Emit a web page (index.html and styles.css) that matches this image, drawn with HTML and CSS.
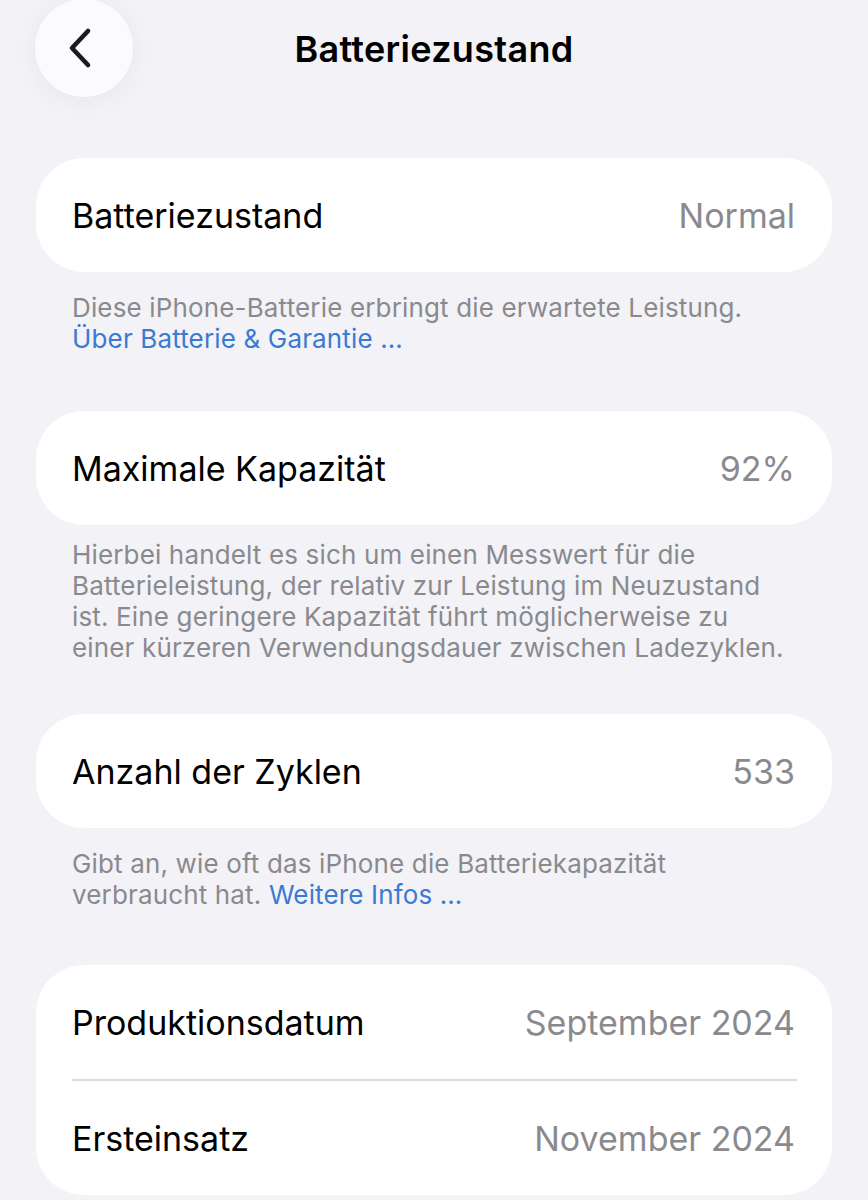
FILE: index.html
```html
<!DOCTYPE html>
<html lang="de">
<head>
<meta charset="utf-8">
<title>Batteriezustand</title>
<link rel="stylesheet" href="styles.css">
</head>
<body>
<header class="nav">
  <div class="nav-left">
    <button class="back" aria-label="Zurück">
      <svg width="30" height="44" viewBox="0 0 30 44"><path d="M22 5 L6 22 L22 39" fill="none" stroke="#1c1c1e" stroke-width="4.6" stroke-linecap="round" stroke-linejoin="round"/></svg>
    </button>
  </div>
  <h1 class="title">Batteriezustand</h1>
  <div class="nav-right"></div>
</header>
<main class="content">
  <section class="card card-first">
    <div class="row"><span class="label">Batteriezustand</span><span class="value">Normal</span></div>
  </section>
  <p class="footnote footnote-link">Diese iPhone-Batterie erbringt die erwartete Leistung.<br><a class="link" href="#">Über Batterie &amp; Garantie …</a></p>

  <section class="card">
    <div class="row"><span class="label">Maximale Kapazität</span><span class="value">92%</span></div>
  </section>
  <p class="footnote footnote-long">Hierbei handelt es sich um einen Messwert für die Batterieleistung, der relativ zur Leistung im Neuzustand ist. Eine geringere Kapazität führt möglicherweise zu einer kürzeren Verwendungsdauer zwischen Ladezyklen.</p>

  <section class="card">
    <div class="row"><span class="label">Anzahl der Zyklen</span><span class="value">533</span></div>
  </section>
  <p class="footnote footnote-link footnote-last">Gibt an, wie oft das iPhone die Batteriekapazität verbraucht hat. <a class="link" href="#">Weitere Infos …</a></p>

  <section class="card">
    <div class="row"><span class="label">Produktionsdatum</span><span class="value">September 2024</span></div>
    <div class="divider"></div>
    <div class="row"><span class="label">Ersteinsatz</span><span class="value">November 2024</span></div>
  </section>
</main>
</body>
</html>
```
FILE: styles.css
```css
html, body {
  margin: 0;
  padding: 0;
}
body {
  background: #f2f2f7;
  font-family: Inter, "Noto Sans", "DejaVu Sans", sans-serif;
  color: #000;
  width: 868px;
  height: 1200px;
  overflow: hidden;
}
.nav {
  display: grid;
  grid-template-columns: 1fr auto 1fr;
  align-items: center;
  height: 97px;
}
.nav-left {
  padding-left: 35px;
  display: flex;
  align-items: center;
}
.back {
  width: 98px;
  height: 98px;
  border-radius: 50%;
  border: none;
  background: #fbfbfd;
  box-shadow: 0 4px 24px rgba(0, 0, 0, 0.05);
  display: flex;
  align-items: center;
  justify-content: center;
  padding: 0 6px 0 0;
  margin-top: -1px;
}
.title {
  margin: 0;
  font-size: 36px;
  font-weight: 600;
  letter-spacing: 0.3px;
}
.content {
  padding: 0 36px;
}
.card {
  background: #fff;
  border-radius: 48px;
  margin: 0;
}
.card-first {
  margin-top: 61px;
}
.row {
  height: 114px;
  display: flex;
  align-items: center;
  justify-content: space-between;
  padding: 0 37px 0 36px;
}
.label {
  font-size: 34px;
}
.value {
  font-size: 34px;
  color: #8a8a8e;
}
.divider {
  height: 2px;
  background: #dcdce0;
  margin: 0 35px 0 36px;
}
.footnote {
  margin: 14px 36px 57px 36px;
  font-size: 26px;
  letter-spacing: 0.15px;
  line-height: 31px;
  color: #8a8a8e;
}
.footnote-link {
  margin-top: 20px;
}
.footnote-long {
  margin-bottom: 51px;
}
.footnote-last {
  margin-bottom: 55px;
}
.link {
  color: #3a7ad2;
  text-decoration: none;
}
```
